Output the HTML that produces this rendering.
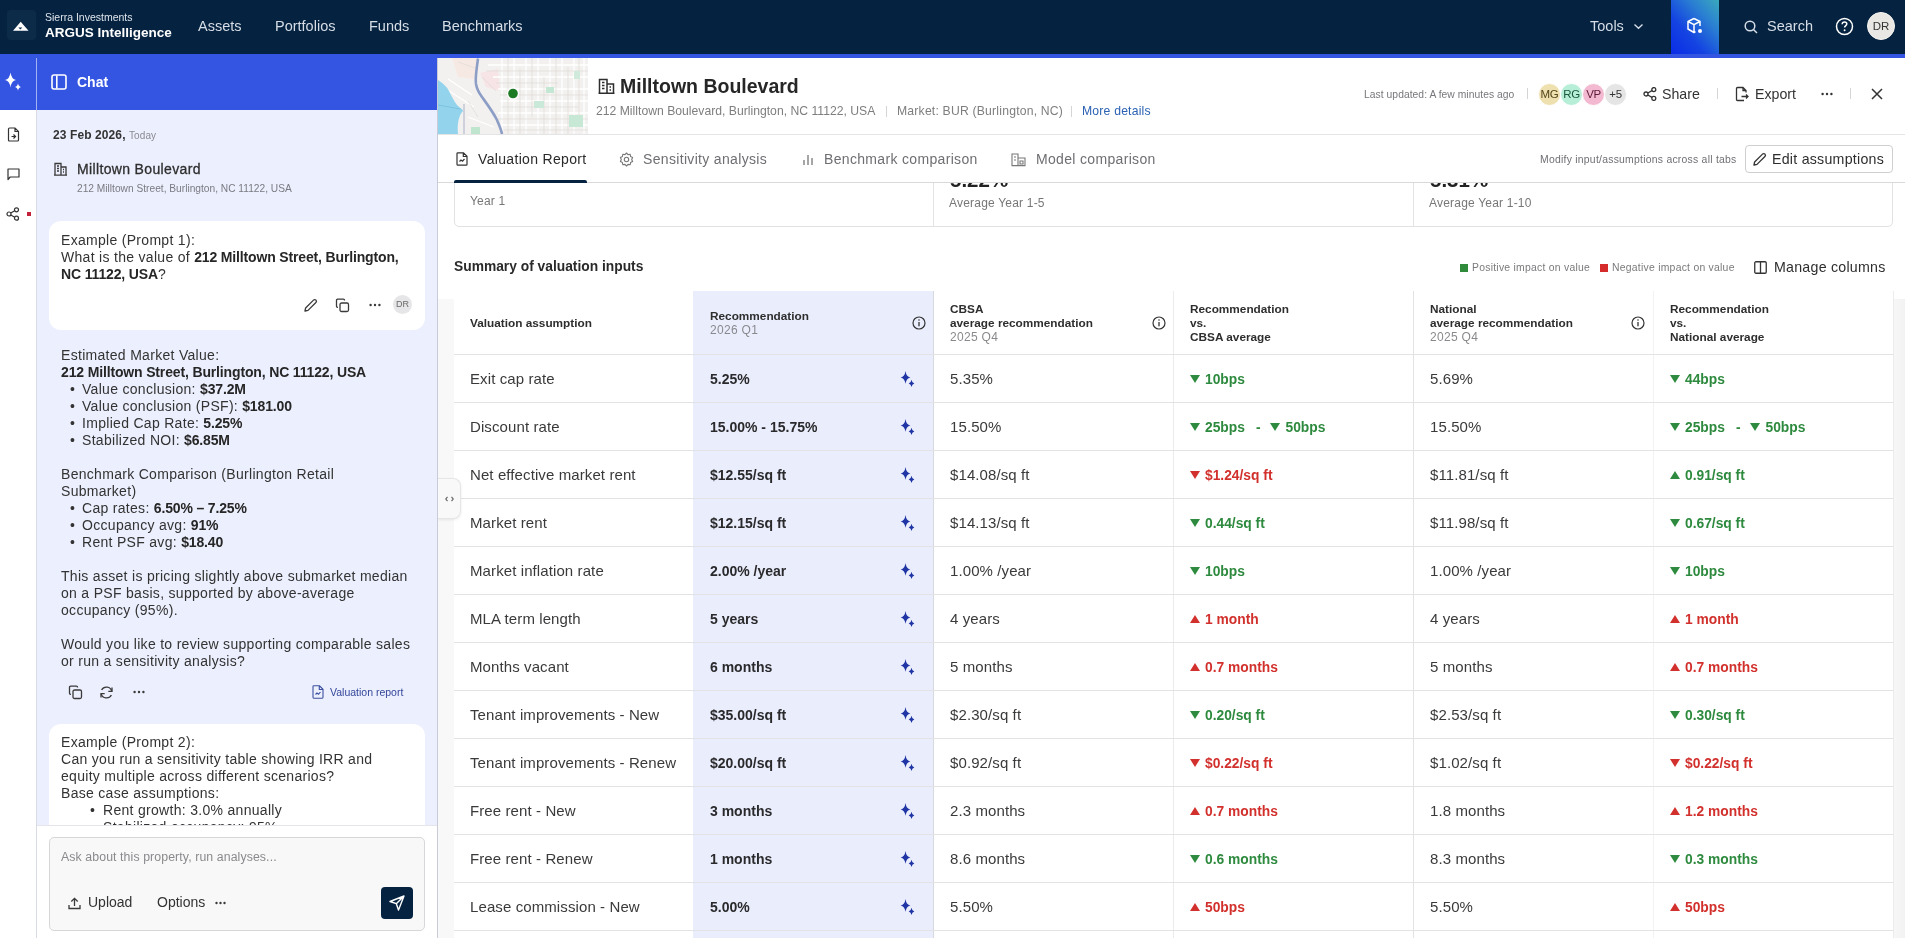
<!DOCTYPE html>
<html><head><meta charset="utf-8">
<style>
*{box-sizing:border-box;margin:0;padding:0}
html,body{width:1905px;height:938px;overflow:hidden;background:#fff;font-family:"Liberation Sans",sans-serif;color:#2e2e2e}
#nav,#chat,#main,#rail,#railtop{will-change:transform}
.abs{position:absolute}
svg{display:block}
/* top nav */
#nav{position:absolute;left:0;top:0;width:1905px;height:54px;background:#052340}
#bluebar{position:absolute;left:0;top:54px;width:1905px;height:4px;background:#3454e2;z-index:5}
.navlink{position:absolute;top:18px;font-size:14.5px;color:#d6dde6;line-height:17px;white-space:nowrap}
/* rail */
#rail{position:absolute;left:0;top:57px;width:37px;height:881px;background:#fff;border-right:1px solid #d9dbe4}
#railtop{position:absolute;left:0;top:57px;width:37px;height:53px;background:#3454e2}
/* chat */
#chat{position:absolute;left:37px;top:57px;width:401px;height:881px;background:#eceffd;border-right:1px solid #c9ccd6;overflow:hidden}
#chathead{position:absolute;left:0;top:0;width:400px;height:53px;background:#3454e2}
.ct{position:absolute;left:24px;font-size:14px;letter-spacing:.3px;line-height:17px;color:#333;white-space:nowrap}
.ct b{font-weight:700;letter-spacing:-.15px;color:#262626}
.bul{position:absolute;font-size:14px;line-height:17px;color:#333}
/* main */
#main{position:absolute;left:438px;top:57px;width:1467px;height:881px;background:#fff;overflow:hidden}
.t14{font-size:14px;line-height:17px;white-space:nowrap}
.gray{color:#777}
/* table */
.row{position:absolute;left:16px;width:1439px;height:48px;border-bottom:1px solid #e3e3e6}
.cell{position:absolute;top:0px;height:48px;font-size:15px;line-height:48px;white-space:nowrap;color:#3a3a3c;letter-spacing:.1px}
.c1{left:16px}
.c2{left:256px;font-weight:700;font-size:14px;color:#2a2a2c;letter-spacing:0}
.c3{left:496px}
.c4{left:736px;font-weight:700;font-size:13.8px;top:1px;letter-spacing:0}
.c5{left:976px}
.c6{left:1216px;font-weight:700;font-size:13.8px;top:1px;letter-spacing:0}
.g{color:#2e8a3e}.r{color:#d2302c}
.tri{display:inline-block;width:0;height:0;border-left:5px solid transparent;border-right:5px solid transparent;margin-right:5px;vertical-align:1px}
.dn{border-top:8px solid currentColor}
.up{border-bottom:8px solid currentColor}

.av{width:23px;height:23px;border-radius:50%;font-size:11.5px;line-height:21px;text-align:center;letter-spacing:-.3px;border:1px solid #fff;top:26px}
.tab{top:94px;font-size:14px;line-height:17px;color:#6e6e73;white-space:nowrap;letter-spacing:.33px}
.kpi{font-size:20.5px;line-height:26px;font-weight:700;color:#222;white-space:nowrap}
.kpis{font-size:12px;line-height:15px;color:#777;white-space:nowrap;letter-spacing:.2px}
.legend{top:79px;font-size:10.4px;line-height:12px;color:#7a7a7e;white-space:nowrap;letter-spacing:.25px}
.th{font-size:11.8px;line-height:14px;font-weight:700;color:#2e2e2e;white-space:nowrap}
.thg{font-weight:400;color:#8a8a8e;font-size:12px;letter-spacing:.3px}
.spk{position:absolute;left:446px;top:14px}
.dsep{display:inline-block;margin:0 10px 0 11px;color:#2e8a3e}
</style></head><body>

<!-- NAV -->
<div id="nav">
  <div class="abs" style="left:7px;top:10px;width:29px;height:30px;background:#0c2b49;border-radius:4px"></div>
  <svg class="abs" style="left:12px;top:21px" width="18" height="11" viewBox="0 0 18 11"><path d="M8.7 .8 L16.5 9.8 L1 9.8 Z" fill="#fff"/><path d="M6.3 6.6 L10.3 6.6 L8.3 8.6Z" fill="#0c2b49"/></svg>
  <div class="abs" style="left:45px;top:11px;font-size:10.5px;line-height:12px;color:#dfe5ec;white-space:nowrap">Sierra Investments</div>
  <div class="abs" style="left:45px;top:25px;font-size:13.5px;line-height:16px;color:#fff;font-weight:700;white-space:nowrap">ARGUS Intelligence</div>
  <div class="navlink" style="left:198px">Assets</div>
  <div class="navlink" style="left:275px">Portfolios</div>
  <div class="navlink" style="left:369px">Funds</div>
  <div class="navlink" style="left:442px">Benchmarks</div>
  <div class="navlink" style="left:1590px">Tools</div>
  <svg class="abs" style="left:1633px;top:23px" width="11" height="7" viewBox="0 0 11 7"><path d="M1.5 1.5 L5.5 5.2 L9.5 1.5" stroke="#d6dde6" stroke-width="1.4" fill="none"/></svg>
  <div class="abs" style="left:1671px;top:0;width:48px;height:54px;background:linear-gradient(to top right,#0a2ce6 0%,#1443e2 35%,#2a7fd2 70%,#3aa9bd 100%)"></div>
  <svg class="abs" style="left:1686px;top:17px" width="18" height="18" viewBox="0 0 18 18"><path d="M8 1.5 L14 4.5 L14 9 M8 1.5 L2 4.5 L2 12 L8 15.5 L9.5 14.7 M2 4.5 L8 7.7 L14 4.5 M8 7.7 L8 15.5" stroke="#fff" stroke-width="1.5" fill="none" stroke-linejoin="round"/><circle cx="14" cy="14" r="2" fill="#fff"/></svg>
  <svg class="abs" style="left:1744px;top:20px" width="14" height="14" viewBox="0 0 14 14"><circle cx="6" cy="6" r="4.8" stroke="#d6dde6" stroke-width="1.5" fill="none"/><path d="M9.5 9.5 L13 13" stroke="#d6dde6" stroke-width="1.5"/></svg>
  <div class="navlink" style="left:1767px">Search</div>
  <svg class="abs" style="left:1835px;top:17px" width="19" height="19" viewBox="0 0 19 19"><circle cx="9.5" cy="9.5" r="8" stroke="#fff" stroke-width="1.5" fill="none"/><path d="M7.2 7.3 C7.2 5.9 8.2 5.1 9.5 5.1 C10.8 5.1 11.8 5.9 11.8 7.1 C11.8 8.6 9.6 8.8 9.6 10.6" stroke="#fff" stroke-width="1.5" fill="none"/><circle cx="9.6" cy="13.3" r=".95" fill="#fff"/></svg>
  <div class="abs" style="left:1867px;top:12px;width:28px;height:28px;border-radius:50%;background:#e9e7e4;border:1.5px solid #f6f5f3;font-size:11.5px;line-height:26px;text-align:center;color:#333">DR</div>
</div>
<div id="bluebar"></div>

<!-- RAIL -->
<div id="rail">
  <svg class="abs" style="left:7px;top:70px" width="13" height="15" viewBox="0 0 13 15"><path d="M1.5 2 C1.5 1.4 1.9 1 2.5 1 H8 L11.5 4.5 V13 C11.5 13.6 11.1 14 10.5 14 H2.5 C1.9 14 1.5 13.6 1.5 13 Z M8 1 V4.5 H11.5" stroke="#333" stroke-width="1.2" fill="none"/><path d="M4.5 9.5 H8.5 M6.5 7.5 L8.5 9.5 L6.5 11.5" stroke="#333" stroke-width="1.2" fill="none"/></svg>
  <svg class="abs" style="left:7px;top:111px" width="13" height="13" viewBox="0 0 13 13"><path d="M1 1 H12 V9 H3.2 L1 11.5 Z" stroke="#333" stroke-width="1.2" fill="none" stroke-linejoin="round"/></svg>
  <svg class="abs" style="left:6px;top:150px" width="14" height="14" viewBox="0 0 14 14"><circle cx="3" cy="7" r="2" stroke="#333" stroke-width="1.2" fill="none"/><circle cx="10.5" cy="2.8" r="2" stroke="#333" stroke-width="1.2" fill="none"/><circle cx="10.5" cy="11.2" r="2" stroke="#333" stroke-width="1.2" fill="none"/><path d="M4.8 6 L8.7 3.8 M4.8 8 L8.7 10.2" stroke="#333" stroke-width="1.2"/></svg>
  <div class="abs" style="left:27px;top:155px;width:4px;height:4px;background:#c3203a"></div>
</div>
<div id="railtop">
  <svg class="abs" style="left:3px;top:14px" width="20" height="22" viewBox="0 0 20 22"><path d="M7.5 1.5 Q8.4 8.1 13.0 9 Q8.4 9.9 7.5 16.5 Q6.6 9.9 2.0 9 Q6.6 8.1 7.5 1.5Z" fill="#fff"/><path d="M15 12.25 Q15.5 15.5 18.0 16 Q15.5 16.5 15 19.75 Q14.5 16.5 12.0 16 Q14.5 15.5 15 12.25Z" fill="#fff"/></svg>
  <div class="abs" style="left:36px;top:0;width:1px;height:53px;background:rgba(255,255,255,.55)"></div>
</div>

<!-- CHAT -->
<div id="chat">
  <div id="chathead">
    <svg class="abs" style="left:14px;top:17px" width="16" height="16" viewBox="0 0 16 16"><rect x="1" y="1" width="14" height="14" rx="2" stroke="#fff" stroke-width="1.6" fill="none"/><path d="M5.8 1.5 V14.5" stroke="#fff" stroke-width="1.6"/></svg>
    <div class="abs" style="left:40px;top:17px;font-size:14px;line-height:17px;font-weight:700;color:#fff">Chat</div>
  </div>
  <div class="abs" style="left:16px;top:71px;font-size:12px;line-height:14px;font-weight:700;color:#333;white-space:nowrap;letter-spacing:.1px">23 Feb 2026, <span style="font-weight:400;font-size:10px;color:#8a8a92">Today</span></div>
  <svg class="abs" style="left:17px;top:105px" width="13" height="14" viewBox="0 0 13 14"><path d="M1 13 V1.5 H7 V13 M7 5 H12 V13 M0 13.2 H13 M3 4 H5 M3 6.5 H5 M3 9 H5 M9 7.5 H10 M9 10 H10" stroke="#3a3a3a" stroke-width="1.3" fill="none"/></svg>
  <div class="abs" style="left:40px;top:104px;font-size:14px;line-height:17px;color:#2e2e2e;white-space:nowrap;letter-spacing:.35px;-webkit-text-stroke:.3px #2e2e2e">Milltown Boulevard</div>
  <div class="abs" style="left:40px;top:126px;font-size:10.2px;line-height:12px;color:#7a7a82;white-space:nowrap">212 Milltown Street, Burlington, NC 11122, USA</div>

  <div class="abs" style="left:12px;top:164px;width:376px;height:109px;background:#fff;border-radius:12px"></div>
  <div class="ct" style="left:24px;top:175px">Example (Prompt 1):</div>
  <div class="ct" style="left:24px;top:192px">What is the value of <b>212 Milltown Street, Burlington,</b></div>
  <div class="ct" style="left:24px;top:209px"><b>NC 11122, USA</b>?</div>
  <svg class="abs" style="left:266px;top:241px" width="15" height="15" viewBox="0 0 15 15"><path d="M2 13 L2.6 10 L10.5 2.1 C11.2 1.4 12.3 1.4 13 2.1 C13.6 2.8 13.6 3.8 12.9 4.5 L5 12.4 Z" stroke="#3a3a3a" stroke-width="1.3" fill="none" stroke-linejoin="round"/></svg>
  <svg class="abs" style="left:298px;top:241px" width="15" height="15" viewBox="0 0 15 15"><rect x="5" y="5" width="8.5" height="8.5" rx="1.5" stroke="#3a3a3a" stroke-width="1.3" fill="none"/><path d="M9.5 2.5 V2.2 C9.5 1.6 9 1.2 8.5 1.2 H2.6 C2 1.2 1.5 1.7 1.5 2.3 V8.3 C1.5 8.9 2 9.4 2.6 9.4 H3" stroke="#3a3a3a" stroke-width="1.3" fill="none"/></svg>
  <svg class="abs" style="left:332px;top:246px" width="12" height="4" viewBox="0 0 12 4"><circle cx="1.6" cy="2" r="1.2" fill="#3a3a3a"/><circle cx="6" cy="2" r="1.2" fill="#3a3a3a"/><circle cx="10.4" cy="2" r="1.2" fill="#3a3a3a"/></svg>
  <div class="abs" style="left:356px;top:238px;width:19px;height:19px;border-radius:50%;background:#e6e6e8;font-size:9px;line-height:19px;text-align:center;color:#6a6a6a">DR</div>

  <div class="ct" style="top:290px">Estimated Market Value:</div>
  <div class="ct" style="top:307px"><b>212 Milltown Street, Burlington, NC 11122, USA</b></div>
  <div class="bul" style="left:33px;top:324px">&bull;</div><div class="ct" style="left:45px;top:324px">Value conclusion: <b>$37.2M</b></div>
  <div class="bul" style="left:33px;top:341px">&bull;</div><div class="ct" style="left:45px;top:341px">Value conclusion (PSF): <b>$181.00</b></div>
  <div class="bul" style="left:33px;top:358px">&bull;</div><div class="ct" style="left:45px;top:358px">Implied Cap Rate: <b>5.25%</b></div>
  <div class="bul" style="left:33px;top:375px">&bull;</div><div class="ct" style="left:45px;top:375px">Stabilized NOI: <b>$6.85M</b></div>
  <div class="ct" style="top:409px">Benchmark Comparison (Burlington Retail</div>
  <div class="ct" style="top:426px">Submarket)</div>
  <div class="bul" style="left:33px;top:443px">&bull;</div><div class="ct" style="left:45px;top:443px">Cap rates: <b>6.50% &ndash; 7.25%</b></div>
  <div class="bul" style="left:33px;top:460px">&bull;</div><div class="ct" style="left:45px;top:460px">Occupancy avg: <b>91%</b></div>
  <div class="bul" style="left:33px;top:477px">&bull;</div><div class="ct" style="left:45px;top:477px">Rent PSF avg: <b>$18.40</b></div>
  <div class="ct" style="top:511px">This asset is pricing slightly above submarket median</div>
  <div class="ct" style="top:528px">on a PSF basis, supported by above-average</div>
  <div class="ct" style="top:545px">occupancy (95%).</div>
  <div class="ct" style="top:579px">Would you like to review supporting comparable sales</div>
  <div class="ct" style="top:596px">or run a sensitivity analysis?</div>
  <svg class="abs" style="left:31px;top:628px" width="15" height="15" viewBox="0 0 15 15"><rect x="5" y="5" width="8.5" height="8.5" rx="1.5" stroke="#3a3a3a" stroke-width="1.3" fill="none"/><path d="M9.5 2.5 V2.2 C9.5 1.6 9 1.2 8.5 1.2 H2.6 C2 1.2 1.5 1.7 1.5 2.3 V8.3 C1.5 8.9 2 9.4 2.6 9.4 H3" stroke="#3a3a3a" stroke-width="1.3" fill="none"/></svg>
  <svg class="abs" style="left:62px;top:628px" width="15" height="15" viewBox="0 0 15 15"><path d="M12.8 6.2 A5.5 5.5 0 0 0 2.6 5 M2.2 8.8 A5.5 5.5 0 0 0 12.4 10" stroke="#3a3a3a" stroke-width="1.3" fill="none"/><path d="M13 2.5 V6.3 H9.3 M2 12.5 V8.7 H5.7" stroke="#3a3a3a" stroke-width="1.3" fill="none"/></svg>
  <svg class="abs" style="left:96px;top:633px" width="12" height="4" viewBox="0 0 12 4"><circle cx="1.6" cy="2" r="1.2" fill="#3a3a3a"/><circle cx="6" cy="2" r="1.2" fill="#3a3a3a"/><circle cx="10.4" cy="2" r="1.2" fill="#3a3a3a"/></svg>
  <svg class="abs" style="left:275px;top:628px" width="12" height="14" viewBox="0 0 12 14"><path d="M1 1.5 C1 1 1.4 .8 1.8 .8 H7.5 L11 4.3 V12.3 C11 12.8 10.6 13.2 10.2 13.2 H1.8 C1.4 13.2 1 12.8 1 12.3 Z M7.3 .8 V4.5 H11 M3.5 9.5 L5 8 L6.5 9.2 L8.5 7" stroke="#3a4fa0" stroke-width="1.1" fill="none"/></svg>
  <div class="abs" style="left:293px;top:628px;font-size:10.5px;line-height:14px;color:#34469a;white-space:nowrap">Valuation report</div>

  <div class="abs" style="left:12px;top:667px;width:376px;height:200px;background:#fff;border-radius:12px"></div>
  <div class="ct" style="top:677px">Example (Prompt 2):</div>
  <div class="ct" style="top:694px">Can you run a sensitivity table showing IRR and</div>
  <div class="ct" style="top:711px">equity multiple across different scenarios?</div>
  <div class="ct" style="top:728px">Base case assumptions:</div>
  <div class="bul" style="left:53px;top:745px">&bull;</div><div class="ct" style="left:66px;top:745px">Rent growth: 3.0% annually</div>
  <div class="bul" style="left:53px;top:762px">&bull;</div><div class="ct" style="left:66px;top:762px">Stabilized occupancy: 95%</div>

  <div class="abs" style="left:0;top:768px;width:400px;height:113px;background:#fff;border-top:1px solid #e4e4ea"></div>
  <div class="abs" style="left:12px;top:780px;width:376px;height:94px;background:#f8f8f8;border:1px solid #d7d7da;border-radius:5px"></div>
  <div class="abs" style="left:24px;top:793px;font-size:12.3px;line-height:14px;color:#8a8a8e;white-space:nowrap;letter-spacing:.1px">Ask about this property, run analyses...</div>
  <svg class="abs" style="left:31px;top:840px" width="13" height="13" viewBox="0 0 13 13"><path d="M1 8 V11.5 H12 V8 M6.5 9 V1.5 M3.3 4.5 L6.5 1.3 L9.7 4.5" stroke="#3a3a3a" stroke-width="1.3" fill="none"/></svg>
  <div class="abs" style="left:51px;top:837px;font-size:14px;line-height:17px;color:#333">Upload</div>
  <div class="abs" style="left:120px;top:837px;font-size:14px;line-height:17px;color:#333">Options</div>
  <svg class="abs" style="left:178px;top:844px" width="11" height="4" viewBox="0 0 11 4"><circle cx="1.5" cy="2" r="1.2" fill="#3a3a3a"/><circle cx="5.5" cy="2" r="1.2" fill="#3a3a3a"/><circle cx="9.5" cy="2" r="1.2" fill="#3a3a3a"/></svg>
  <div class="abs" style="left:344px;top:830px;width:32px;height:32px;background:#052340;border-radius:4px"></div>
  <svg class="abs" style="left:351px;top:837px" width="18" height="18" viewBox="0 0 18 18"><path d="M2 7.5 L16 2 L10.5 16 L8.3 9.7 Z M8.3 9.7 L16 2" stroke="#fff" stroke-width="1.4" fill="none" stroke-linejoin="round"/></svg>
</div>

<!-- MAIN -->
<div id="main">
  <svg class="abs" style="left:0;top:1px" width="150" height="76" viewBox="0 1 150 76">
    <rect y="0" width="150" height="77" fill="#f3f1ef"/>
    <path d="M14 1 L40 1 L36 22 L20 20 Z" fill="#f6e9e3"/>
    <path d="M42 16 L60 12 L62 34 L48 30 Z" fill="#f7e4e6"/>
    <g stroke="#ffffff" stroke-width="1.3" fill="none">
      <path d="M64 1 V77 M76 1 V77 M88 1 V77 M100 1 V77 M112 1 V77 M124 1 V77 M136 1 V77 M146 1 V77"/>
      <path d="M50 8 H150 M55 20 H150 M60 32 H150 M62 44 H150 M60 56 H150 M62 68 H150"/>
      <path d="M5 30 L36 50 M10 22 L34 38 M30 60 L56 70"/>
    </g>
    <g stroke="#dedad6" stroke-width=".7" fill="none">
      <path d="M70 1 V77 M82 12 V77 M94 1 V60 M106 20 V77 M118 1 V77 M130 10 V77 M141 1 V70"/>
      <path d="M48 14 H150 M58 26 H120 M62 38 H150 M64 50 H140 M60 62 H150 M66 73 H150"/>
      <path d="M20 5 L40 12 M44 20 L58 34 M30 44 L40 60"/>
    </g>
    <path d="M0 23 C5 26 9 30 11 34 C14 40 16 44 19 48 C22 51 25 52 25 54 C21 58 19 66 20 77 H0 Z" fill="#93d4ec"/>
    <path d="M0 48 L22 52" stroke="#6fb6d6" stroke-width=".6"/>
    <path d="M40 1.5 C39 10 37 20 38 27 C39 33 41 36 44 40 C49 47 55 55 59 63 C61 68 63 72 64 77" stroke="#8c9dc6" stroke-width="2.6" fill="none"/>
    <path d="M26 47 V77" stroke="#a9b2c9" stroke-width="1"/>
    <rect x="108" y="30" width="8" height="6" fill="#c4e7d4"/>
    <rect x="96" y="44" width="10" height="7" fill="#cbe9d8"/>
    <rect x="131" y="58" width="14" height="12" fill="#c7e8d5"/>
    <rect x="33" y="70" width="9" height="7" fill="#bfe5cf"/>
    <rect x="136" y="14" width="6" height="8" fill="#cfeadb"/>
    <circle cx="75" cy="36.5" r="6.3" fill="#fff" opacity=".85"/>
    <circle cx="75" cy="36.5" r="4.8" fill="#1b7a22"/>
  </svg>
  <svg class="abs" style="left:160px;top:21px" width="17" height="16" viewBox="0 0 17 16"><path d="M1.5 15 V1.5 H9 V15 M9 6 H15.5 V15 M0.5 15.2 H16.5 M4 4.5 H6.5 M4 7.5 H6.5 M4 10.5 H6.5 M11.5 9 H13 M11.5 12 H13" stroke="#2e2e2e" stroke-width="1.5" fill="none"/></svg>
  <div class="abs" style="left:182px;top:18px;font-size:19.5px;line-height:22px;font-weight:700;color:#262626;white-space:nowrap">Milltown Boulevard</div>
  <div class="abs" style="left:158px;top:47px;font-size:12.2px;line-height:15px;color:#7e7e80;white-space:nowrap">212 Milltown Boulevard, Burlington, NC 11122, USA</div>
  <div class="abs" style="left:448px;top:49px;width:1px;height:11px;background:#d5d5d5"></div>
  <div class="abs" style="left:459px;top:47px;font-size:12.2px;line-height:15px;color:#7e7e80;white-space:nowrap;letter-spacing:.2px">Market: BUR (Burlington, NC)</div>
  <div class="abs" style="left:633px;top:49px;width:1px;height:11px;background:#d5d5d5"></div>
  <div class="abs" style="left:644px;top:47px;font-size:12.2px;line-height:15px;color:#2c62b3;white-space:nowrap;letter-spacing:.2px">More details</div>

  <div class="abs" style="left:926px;top:32px;font-size:10.3px;line-height:12px;color:#77777c;white-space:nowrap;letter-spacing:.05px">Last updated: A few minutes ago</div>
  <div class="abs" style="left:1089px;top:31px;width:1px;height:11px;background:#d5d5d5"></div>
  <div class="abs av" style="left:1100px;background:#efe0b0;color:#54461a">MG</div>
  <div class="abs av" style="left:1122px;background:#b6eed7;color:#1b5a3c">RG</div>
  <div class="abs av" style="left:1144px;background:#f3b9d0;color:#5e1a38">VP</div>
  <div class="abs av" style="left:1166px;background:#e5e5e5;color:#333">+5</div>
  <svg class="abs" style="left:1205px;top:30px" width="14" height="14" viewBox="0 0 14 14"><circle cx="3" cy="7" r="2" stroke="#333" stroke-width="1.3" fill="none"/><circle cx="10.8" cy="2.6" r="2" stroke="#333" stroke-width="1.3" fill="none"/><circle cx="10.8" cy="11.4" r="2" stroke="#333" stroke-width="1.3" fill="none"/><path d="M4.8 6 L9 3.6 M4.8 8 L9 10.4" stroke="#333" stroke-width="1.3"/></svg>
  <div class="abs t14" style="left:1224px;top:29px;color:#333;font-size:14.2px">Share</div>
  <div class="abs" style="left:1279px;top:31px;width:1px;height:11px;background:#d5d5d5"></div>
  <svg class="abs" style="left:1297px;top:29px" width="14" height="16" viewBox="0 0 14 16"><path d="M9 14.5 H2.5 C1.9 14.5 1.5 14.1 1.5 13.5 V2.5 C1.5 1.9 1.9 1.5 2.5 1.5 H8 L11 4.5 V6.5 M8 1.5 V4.5 H11 M6.5 10.5 H13 M11 8.5 L13 10.5 L11 12.5" stroke="#333" stroke-width="1.3" fill="none"/></svg>
  <div class="abs t14" style="left:1317px;top:29px;color:#333;font-size:14.2px">Export</div>
  <svg class="abs" style="left:1383px;top:35px" width="12" height="4" viewBox="0 0 12 4"><circle cx="1.6" cy="2" r="1.2" fill="#333"/><circle cx="6" cy="2" r="1.2" fill="#333"/><circle cx="10.4" cy="2" r="1.2" fill="#333"/></svg>
  <div class="abs" style="left:1412px;top:31px;width:1px;height:11px;background:#d5d5d5"></div>
  <svg class="abs" style="left:1433px;top:31px" width="12" height="12" viewBox="0 0 12 12"><path d="M1 1 L11 11 M11 1 L1 11" stroke="#333" stroke-width="1.5"/></svg>
  <div class="abs" style="left:0;top:77px;width:1467px;height:1px;background:#e4e4e4"></div>

  <!-- tabs -->
  <svg class="abs" style="left:18px;top:95px" width="12" height="14" viewBox="0 0 12 14"><path d="M1 1.5 C1 1 1.4 .8 1.8 .8 H7.5 L11 4.3 V12.3 C11 12.8 10.6 13.2 10.2 13.2 H1.8 C1.4 13.2 1 12.8 1 12.3 Z M7.3 .8 V4.5 H11 M3.5 9.5 L5 8 L6.5 9.2 L8.5 7" stroke="#333" stroke-width="1.2" fill="none"/></svg>
  <div class="abs tab" style="left:40px;color:#2a2a2a">Valuation Report</div>
  <svg class="abs" style="left:181px;top:95px" width="15" height="15" viewBox="0 0 15 15"><path d="M7.5 1 L9 2.6 L11.2 2.3 L11.6 4.5 L13.6 5.5 L12.7 7.5 L13.6 9.5 L11.6 10.5 L11.2 12.7 L9 12.4 L7.5 14 L6 12.4 L3.8 12.7 L3.4 10.5 L1.4 9.5 L2.3 7.5 L1.4 5.5 L3.4 4.5 L3.8 2.3 L6 2.6 Z" stroke="#777" stroke-width="1.1" fill="none" stroke-linejoin="round"/><circle cx="7.5" cy="7.5" r="2.2" stroke="#777" stroke-width="1.1" fill="none"/></svg>
  <div class="abs tab" style="left:205px">Sensitivity analysis</div>
  <svg class="abs" style="left:364px;top:96px" width="12" height="13" viewBox="0 0 12 13"><path d="M2 12 V7 M6 12 V2 M10 12 V5" stroke="#777" stroke-width="1.3"/></svg>
  <div class="abs tab" style="left:386px">Benchmark comparison</div>
  <svg class="abs" style="left:573px;top:95px" width="15" height="15" viewBox="0 0 15 15"><path d="M1 13.5 V2 H7 V13.5 M7 6 H14 V13.5 M0.5 13.6 H14.5 M3 5 H5 M3 8 H5 M9 9 H12 V12 H9 Z" stroke="#777" stroke-width="1.1" fill="none"/></svg>
  <div class="abs tab" style="left:598px">Model comparison</div>
  <div class="abs" style="left:1102px;top:97px;font-size:10.4px;line-height:12px;color:#6f6f74;white-space:nowrap;letter-spacing:.25px">Modify input/assumptions across all tabs</div>
  <div class="abs" style="left:1307px;top:88px;width:148px;height:28px;border:1px solid #cfcfd2;border-radius:4px;background:#fff"></div>
  <svg class="abs" style="left:1314px;top:95px" width="15" height="15" viewBox="0 0 15 15"><path d="M2 13 L2.6 10 L10.5 2.1 C11.2 1.4 12.3 1.4 13 2.1 C13.6 2.8 13.6 3.8 12.9 4.5 L5 12.4 Z" stroke="#333" stroke-width="1.3" fill="none" stroke-linejoin="round"/></svg>
  <div class="abs t14" style="left:1334px;top:94px;color:#2e2e2e;font-size:14.2px;letter-spacing:.25px">Edit assumptions</div>

  <!-- scroll content -->
  <div class="abs" style="left:0;top:126px;width:1467px;height:755px;overflow:hidden">
    <div class="abs" style="left:16px;top:-40px;width:1439px;height:84px;border:1px solid #e2e2e4;border-radius:5px"></div>
    <div class="abs" style="left:495px;top:-40px;width:1px;height:84px;background:#e2e2e4"></div>
    <div class="abs" style="left:975px;top:-40px;width:1px;height:84px;background:#e2e2e4"></div>
    <div class="abs kpi" style="left:512px;top:-16px">5.22%</div>
    <div class="abs kpi" style="left:992px;top:-16px">5.31%</div>
    <div class="abs kpis" style="left:32px;top:11px">Year 1</div>
    <div class="abs kpis" style="left:511px;top:13px">Average Year 1-5</div>
    <div class="abs kpis" style="left:991px;top:13px">Average Year 1-10</div>

    <div class="abs" style="left:16px;top:75px;font-size:13.8px;line-height:17px;font-weight:700;color:#2a2a2a;white-space:nowrap">Summary of valuation inputs</div>
    <div class="abs" style="left:1022px;top:81px;width:8px;height:8px;background:#2f8a3a"></div>
    <div class="abs legend" style="left:1034px">Positive impact on value</div>
    <div class="abs" style="left:1162px;top:81px;width:8px;height:8px;background:#d52b2b"></div>
    <div class="abs legend" style="left:1174px">Negative impact on value</div>
    <svg class="abs" style="left:1316px;top:78px" width="13" height="13" viewBox="0 0 13 13"><rect x=".75" y=".75" width="11.5" height="11.5" rx="1.2" stroke="#333" stroke-width="1.3" fill="none"/><path d="M6.5 1 V12" stroke="#333" stroke-width="1.3"/></svg>
    <div class="abs t14" style="left:1336px;top:76px;color:#2e2e2e;font-size:14.2px;letter-spacing:.25px">Manage columns</div>

    <!-- table -->
    <div class="abs" style="left:0;top:116px;width:16px;height:700px;background:#f8f8f9"></div>
    <div class="abs" style="left:1455px;top:116px;width:12px;height:700px;background:linear-gradient(90deg,#f7f7f8,#f2f2f3)"></div>
    <div class="abs" style="left:255px;top:108px;width:240px;height:700px;background:#eaedfc"></div>
    <div class="abs" style="left:495px;top:108px;width:1px;height:700px;background:#d6d8e2"></div>
    <div class="abs" style="left:735px;top:108px;width:1px;height:700px;background:#ececef"></div>
    <div class="abs" style="left:975px;top:108px;width:1px;height:700px;background:#e2e2e5"></div>
    <div class="abs" style="left:1215px;top:108px;width:1px;height:700px;background:#f3f3f5"></div>
    <div class="abs" style="left:1455px;top:108px;width:1px;height:700px;background:#ececef"></div>
    <div class="abs" style="left:16px;top:108px;width:1439px;height:64px;border-bottom:1px solid #e3e3e6"></div>
    <div class="abs th" style="left:32px;top:133px">Valuation assumption</div>
    <div class="abs th" style="left:272px;top:126px">Recommendation<br><span class="thg">2026 Q1</span></div>
    <svg class="abs" width="14" height="14" viewBox="0 0 14 14" style="left:474px;top:133px"><circle cx="7" cy="7" r="6" stroke="#333" stroke-width="1.2" fill="none"/><path d="M7 6 V10.3" stroke="#333" stroke-width="1.3"/><circle cx="7" cy="4" r=".8" fill="#333"/></svg>
    <div class="abs th" style="left:512px;top:119px">CBSA<br>average recommendation<br><span class="thg">2025 Q4</span></div>
    <svg class="abs" width="14" height="14" viewBox="0 0 14 14" style="left:714px;top:133px"><circle cx="7" cy="7" r="6" stroke="#333" stroke-width="1.2" fill="none"/><path d="M7 6 V10.3" stroke="#333" stroke-width="1.3"/><circle cx="7" cy="4" r=".8" fill="#333"/></svg>
    <div class="abs th" style="left:752px;top:119px">Recommendation<br>vs.<br>CBSA average</div>
    <div class="abs th" style="left:992px;top:119px">National<br>average recommendation<br><span class="thg">2025 Q4</span></div>
    <svg class="abs" width="14" height="14" viewBox="0 0 14 14" style="left:1193px;top:133px"><circle cx="7" cy="7" r="6" stroke="#333" stroke-width="1.2" fill="none"/><path d="M7 6 V10.3" stroke="#333" stroke-width="1.3"/><circle cx="7" cy="4" r=".8" fill="#333"/></svg>
    <div class="abs th" style="left:1232px;top:119px">Recommendation<br>vs.<br>National average</div>
    <div class="row" style="top:172px"><div class="cell c1">Exit cap rate</div><div class="cell c2">5.25%</div><svg class="spk" width="17" height="19" viewBox="0 0 17 19"><path d="M5.5 2.0 Q6.25 7.65 10.3 8.4 Q6.25 9.15 5.5 14.8 Q4.75 9.15 0.7000000000000002 8.4 Q4.75 7.65 5.5 2.0Z" fill="#1f35a6"/><path d="M11.5 10.8 Q11.95 13.950000000000001 14.3 14.4 Q11.95 14.85 11.5 18.0 Q11.05 14.85 8.7 14.4 Q11.05 13.950000000000001 11.5 10.8Z" fill="#1f35a6"/></svg><div class="cell c3">5.35%</div><div class="cell c4"><span class="g"><i class="tri dn"></i>10bps</span></div><div class="cell c5">5.69%</div><div class="cell c6"><span class="g"><i class="tri dn"></i>44bps</span></div></div><div class="row" style="top:220px"><div class="cell c1">Discount rate</div><div class="cell c2">15.00% - 15.75%</div><svg class="spk" width="17" height="19" viewBox="0 0 17 19"><path d="M5.5 2.0 Q6.25 7.65 10.3 8.4 Q6.25 9.15 5.5 14.8 Q4.75 9.15 0.7000000000000002 8.4 Q4.75 7.65 5.5 2.0Z" fill="#1f35a6"/><path d="M11.5 10.8 Q11.95 13.950000000000001 14.3 14.4 Q11.95 14.85 11.5 18.0 Q11.05 14.85 8.7 14.4 Q11.05 13.950000000000001 11.5 10.8Z" fill="#1f35a6"/></svg><div class="cell c3">15.50%</div><div class="cell c4"><span class="g"><i class="tri dn"></i>25bps</span><span class="dsep">-</span><span class="g"><i class="tri dn"></i>50bps</span></div><div class="cell c5">15.50%</div><div class="cell c6"><span class="g"><i class="tri dn"></i>25bps</span><span class="dsep">-</span><span class="g"><i class="tri dn"></i>50bps</span></div></div><div class="row" style="top:268px"><div class="cell c1">Net effective market rent</div><div class="cell c2">$12.55/sq ft</div><svg class="spk" width="17" height="19" viewBox="0 0 17 19"><path d="M5.5 2.0 Q6.25 7.65 10.3 8.4 Q6.25 9.15 5.5 14.8 Q4.75 9.15 0.7000000000000002 8.4 Q4.75 7.65 5.5 2.0Z" fill="#1f35a6"/><path d="M11.5 10.8 Q11.95 13.950000000000001 14.3 14.4 Q11.95 14.85 11.5 18.0 Q11.05 14.85 8.7 14.4 Q11.05 13.950000000000001 11.5 10.8Z" fill="#1f35a6"/></svg><div class="cell c3">$14.08/sq ft</div><div class="cell c4"><span class="r"><i class="tri dn"></i>$1.24/sq ft</span></div><div class="cell c5">$11.81/sq ft</div><div class="cell c6"><span class="g"><i class="tri up"></i>0.91/sq ft</span></div></div><div class="row" style="top:316px"><div class="cell c1">Market rent</div><div class="cell c2">$12.15/sq ft</div><svg class="spk" width="17" height="19" viewBox="0 0 17 19"><path d="M5.5 2.0 Q6.25 7.65 10.3 8.4 Q6.25 9.15 5.5 14.8 Q4.75 9.15 0.7000000000000002 8.4 Q4.75 7.65 5.5 2.0Z" fill="#1f35a6"/><path d="M11.5 10.8 Q11.95 13.950000000000001 14.3 14.4 Q11.95 14.85 11.5 18.0 Q11.05 14.85 8.7 14.4 Q11.05 13.950000000000001 11.5 10.8Z" fill="#1f35a6"/></svg><div class="cell c3">$14.13/sq ft</div><div class="cell c4"><span class="g"><i class="tri dn"></i>0.44/sq ft</span></div><div class="cell c5">$11.98/sq ft</div><div class="cell c6"><span class="g"><i class="tri dn"></i>0.67/sq ft</span></div></div><div class="row" style="top:364px"><div class="cell c1">Market inflation rate</div><div class="cell c2">2.00% /year</div><svg class="spk" width="17" height="19" viewBox="0 0 17 19"><path d="M5.5 2.0 Q6.25 7.65 10.3 8.4 Q6.25 9.15 5.5 14.8 Q4.75 9.15 0.7000000000000002 8.4 Q4.75 7.65 5.5 2.0Z" fill="#1f35a6"/><path d="M11.5 10.8 Q11.95 13.950000000000001 14.3 14.4 Q11.95 14.85 11.5 18.0 Q11.05 14.85 8.7 14.4 Q11.05 13.950000000000001 11.5 10.8Z" fill="#1f35a6"/></svg><div class="cell c3">1.00% /year</div><div class="cell c4"><span class="g"><i class="tri dn"></i>10bps</span></div><div class="cell c5">1.00% /year</div><div class="cell c6"><span class="g"><i class="tri dn"></i>10bps</span></div></div><div class="row" style="top:412px"><div class="cell c1">MLA term length</div><div class="cell c2">5 years</div><svg class="spk" width="17" height="19" viewBox="0 0 17 19"><path d="M5.5 2.0 Q6.25 7.65 10.3 8.4 Q6.25 9.15 5.5 14.8 Q4.75 9.15 0.7000000000000002 8.4 Q4.75 7.65 5.5 2.0Z" fill="#1f35a6"/><path d="M11.5 10.8 Q11.95 13.950000000000001 14.3 14.4 Q11.95 14.85 11.5 18.0 Q11.05 14.85 8.7 14.4 Q11.05 13.950000000000001 11.5 10.8Z" fill="#1f35a6"/></svg><div class="cell c3">4 years</div><div class="cell c4"><span class="r"><i class="tri up"></i>1 month</span></div><div class="cell c5">4 years</div><div class="cell c6"><span class="r"><i class="tri up"></i>1 month</span></div></div><div class="row" style="top:460px"><div class="cell c1">Months vacant</div><div class="cell c2">6 months</div><svg class="spk" width="17" height="19" viewBox="0 0 17 19"><path d="M5.5 2.0 Q6.25 7.65 10.3 8.4 Q6.25 9.15 5.5 14.8 Q4.75 9.15 0.7000000000000002 8.4 Q4.75 7.65 5.5 2.0Z" fill="#1f35a6"/><path d="M11.5 10.8 Q11.95 13.950000000000001 14.3 14.4 Q11.95 14.85 11.5 18.0 Q11.05 14.85 8.7 14.4 Q11.05 13.950000000000001 11.5 10.8Z" fill="#1f35a6"/></svg><div class="cell c3">5 months</div><div class="cell c4"><span class="r"><i class="tri up"></i>0.7 months</span></div><div class="cell c5">5 months</div><div class="cell c6"><span class="r"><i class="tri up"></i>0.7 months</span></div></div><div class="row" style="top:508px"><div class="cell c1">Tenant improvements - New</div><div class="cell c2">$35.00/sq ft</div><svg class="spk" width="17" height="19" viewBox="0 0 17 19"><path d="M5.5 2.0 Q6.25 7.65 10.3 8.4 Q6.25 9.15 5.5 14.8 Q4.75 9.15 0.7000000000000002 8.4 Q4.75 7.65 5.5 2.0Z" fill="#1f35a6"/><path d="M11.5 10.8 Q11.95 13.950000000000001 14.3 14.4 Q11.95 14.85 11.5 18.0 Q11.05 14.85 8.7 14.4 Q11.05 13.950000000000001 11.5 10.8Z" fill="#1f35a6"/></svg><div class="cell c3">$2.30/sq ft</div><div class="cell c4"><span class="g"><i class="tri dn"></i>0.20/sq ft</span></div><div class="cell c5">$2.53/sq ft</div><div class="cell c6"><span class="g"><i class="tri dn"></i>0.30/sq ft</span></div></div><div class="row" style="top:556px"><div class="cell c1">Tenant improvements - Renew</div><div class="cell c2">$20.00/sq ft</div><svg class="spk" width="17" height="19" viewBox="0 0 17 19"><path d="M5.5 2.0 Q6.25 7.65 10.3 8.4 Q6.25 9.15 5.5 14.8 Q4.75 9.15 0.7000000000000002 8.4 Q4.75 7.65 5.5 2.0Z" fill="#1f35a6"/><path d="M11.5 10.8 Q11.95 13.950000000000001 14.3 14.4 Q11.95 14.85 11.5 18.0 Q11.05 14.85 8.7 14.4 Q11.05 13.950000000000001 11.5 10.8Z" fill="#1f35a6"/></svg><div class="cell c3">$0.92/sq ft</div><div class="cell c4"><span class="r"><i class="tri dn"></i>$0.22/sq ft</span></div><div class="cell c5">$1.02/sq ft</div><div class="cell c6"><span class="r"><i class="tri dn"></i>$0.22/sq ft</span></div></div><div class="row" style="top:604px"><div class="cell c1">Free rent - New</div><div class="cell c2">3 months</div><svg class="spk" width="17" height="19" viewBox="0 0 17 19"><path d="M5.5 2.0 Q6.25 7.65 10.3 8.4 Q6.25 9.15 5.5 14.8 Q4.75 9.15 0.7000000000000002 8.4 Q4.75 7.65 5.5 2.0Z" fill="#1f35a6"/><path d="M11.5 10.8 Q11.95 13.950000000000001 14.3 14.4 Q11.95 14.85 11.5 18.0 Q11.05 14.85 8.7 14.4 Q11.05 13.950000000000001 11.5 10.8Z" fill="#1f35a6"/></svg><div class="cell c3">2.3 months</div><div class="cell c4"><span class="r"><i class="tri up"></i>0.7 months</span></div><div class="cell c5">1.8 months</div><div class="cell c6"><span class="r"><i class="tri up"></i>1.2 months</span></div></div><div class="row" style="top:652px"><div class="cell c1">Free rent - Renew</div><div class="cell c2">1 months</div><svg class="spk" width="17" height="19" viewBox="0 0 17 19"><path d="M5.5 2.0 Q6.25 7.65 10.3 8.4 Q6.25 9.15 5.5 14.8 Q4.75 9.15 0.7000000000000002 8.4 Q4.75 7.65 5.5 2.0Z" fill="#1f35a6"/><path d="M11.5 10.8 Q11.95 13.950000000000001 14.3 14.4 Q11.95 14.85 11.5 18.0 Q11.05 14.85 8.7 14.4 Q11.05 13.950000000000001 11.5 10.8Z" fill="#1f35a6"/></svg><div class="cell c3">8.6 months</div><div class="cell c4"><span class="g"><i class="tri dn"></i>0.6 months</span></div><div class="cell c5">8.3 months</div><div class="cell c6"><span class="g"><i class="tri dn"></i>0.3 months</span></div></div><div class="row" style="top:700px"><div class="cell c1">Lease commission - New</div><div class="cell c2">5.00%</div><svg class="spk" width="17" height="19" viewBox="0 0 17 19"><path d="M5.5 2.0 Q6.25 7.65 10.3 8.4 Q6.25 9.15 5.5 14.8 Q4.75 9.15 0.7000000000000002 8.4 Q4.75 7.65 5.5 2.0Z" fill="#1f35a6"/><path d="M11.5 10.8 Q11.95 13.950000000000001 14.3 14.4 Q11.95 14.85 11.5 18.0 Q11.05 14.85 8.7 14.4 Q11.05 13.950000000000001 11.5 10.8Z" fill="#1f35a6"/></svg><div class="cell c3">5.50%</div><div class="cell c4"><span class="r"><i class="tri up"></i>50bps</span></div><div class="cell c5">5.50%</div><div class="cell c6"><span class="r"><i class="tri up"></i>50bps</span></div></div><div class="row" style="top:748px"><div class="cell c1">Lease commission - Renew</div><div class="cell c2">5.00%</div><svg class="spk" width="17" height="19" viewBox="0 0 17 19"><path d="M5.5 2.0 Q6.25 7.65 10.3 8.4 Q6.25 9.15 5.5 14.8 Q4.75 9.15 0.7000000000000002 8.4 Q4.75 7.65 5.5 2.0Z" fill="#1f35a6"/><path d="M11.5 10.8 Q11.95 13.950000000000001 14.3 14.4 Q11.95 14.85 11.5 18.0 Q11.05 14.85 8.7 14.4 Q11.05 13.950000000000001 11.5 10.8Z" fill="#1f35a6"/></svg><div class="cell c3">5.50%</div><div class="cell c4"><span class="r"><i class="tri up"></i>50bps</span></div><div class="cell c5">5.50%</div><div class="cell c6"><span class="r"><i class="tri up"></i>50bps</span></div></div>
  </div>
  <div class="abs" style="left:0;top:125px;width:1467px;height:1px;background:#d9d9dc"></div>
  <div class="abs" style="left:16px;top:123px;width:133px;height:3px;background:#052340;border-radius:2px 2px 0 0"></div>
  <div class="abs" style="left:0;top:421px;width:23px;height:41px;background:#f9f9f9;border:1px solid #e6e6e8;border-left:none;border-radius:0 8px 8px 0;box-shadow:0 1px 3px rgba(0,0,0,.08)"></div>
  <svg class="abs" style="left:7px;top:439px" width="9" height="6" viewBox="0 0 9 6"><path d="M2.5 .8 L.8 3 L2.5 5.2 M6.5 .8 L8.2 3 L6.5 5.2" stroke="#666" stroke-width="1.2" fill="none"/></svg>
</div>

</body></html>
